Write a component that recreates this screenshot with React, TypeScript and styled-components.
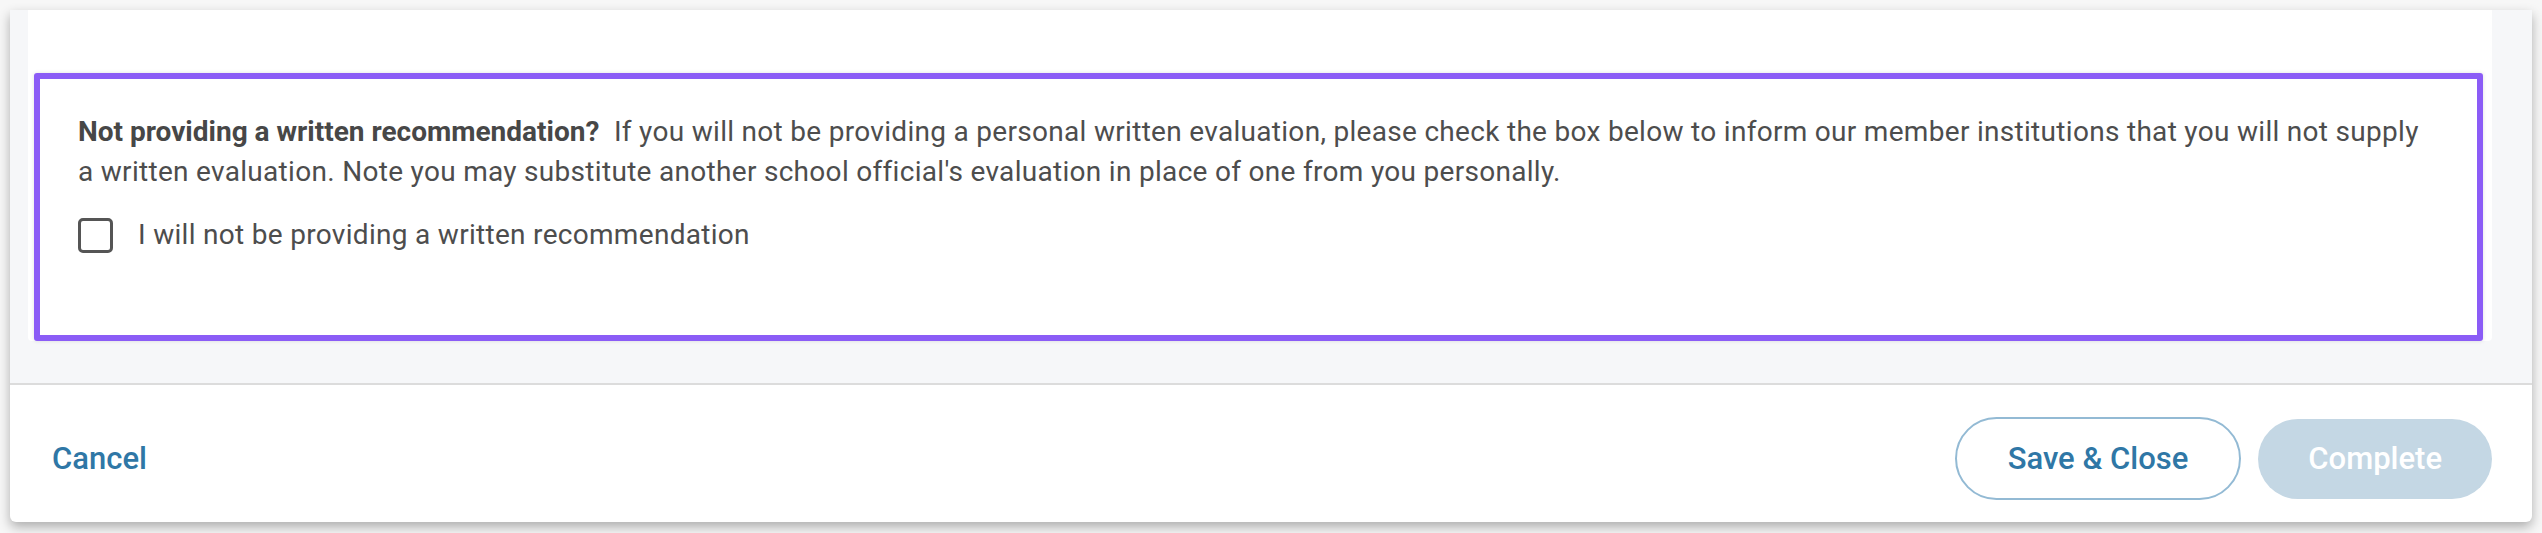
import React from "react";
import styled, { createGlobalStyle } from "styled-components";

const GlobalStyle = createGlobalStyle`
  html, body {
    margin: 0;
    padding: 0;
    background: #f7f7f7;
  }

  body {
    font-family: Roboto, "Liberation Sans", sans-serif;
  }

  * {
    box-sizing: border-box;
  }
`;

const Page = styled.div`
  padding: 10px 10px 11px 10px;
`;

const Card = styled.div`
  background: #ffffff;
  border-radius: 0 0 6px 6px;
  box-shadow: 0 5px 12px rgba(0, 0, 0, 0.3);
  overflow: hidden;
`;

const Body = styled.div`
  background: #f6f7f9;
  padding: 0 40px 51px 18px;
  border-bottom: 2px solid #dcdcdc;
`;

const Panel = styled.div`
  background: #ffffff;
  border-radius: 0 0 4px 4px;
  padding: 63px 9px 0 6px;
`;

const Section = styled.section`
  height: 268px;
  margin-bottom: -9px;
  border: 6px solid #8b5cf6;
  border-radius: 3px;
  padding: 33px 38px 0 38px;
  background: #ffffff;
  box-shadow: 0 0 4px rgba(0, 0, 0, 0.12);
  position: relative;
`;

const Notice = styled.p`
  margin: 0;
  font-size: 28px;
  line-height: 40px;
  letter-spacing: 0.3px;
  color: #4d4d4d;

  strong {
    font-weight: 700;
    letter-spacing: 0;
    color: #474747;
  }
`;

const CheckRow = styled.label`
  display: flex;
  align-items: center;
  gap: 25px;
  margin-top: 23px;
  font-size: 28px;
  line-height: 40px;
  letter-spacing: 0.3px;
  color: #4d4d4d;
  cursor: pointer;
`;

const Box = styled.input.attrs({ type: "checkbox" })`
  appearance: none;
  margin: 0;
  width: 35px;
  height: 35px;
  border: 3px solid #555555;
  border-radius: 5px;
  background: #ffffff;
  flex-shrink: 0;
`;

const Footer = styled.div`
  display: flex;
  align-items: center;
  justify-content: space-between;
  padding: 32px 40px 22px 42px;
`;

const LinkButton = styled.a`
  font-size: 31px;
  font-weight: 500;
  color: #2f77a6;
  text-decoration: none;
  cursor: pointer;
`;

const Actions = styled.div`
  display: flex;
  align-items: center;
  gap: 17px;
`;

const PillButton = styled.button<{ $variant: "outline" | "disabled" }>`
  height: ${(p) => (p.$variant === "outline" ? "83px" : "80px")};
  padding: 0 ${(p) => (p.$variant === "outline" ? "51px" : "50px")};
  border-radius: 42px;
  font-family: Roboto, "Liberation Sans", sans-serif;
  font-size: 31px;
  font-weight: 500;
  border: ${(p) => (p.$variant === "outline" ? "2px solid #93bad4" : "none")};
  background: ${(p) => (p.$variant === "outline" ? "#ffffff" : "#c4d7e4")};
  color: ${(p) => (p.$variant === "outline" ? "#2f77a6" : "#ffffff")};
  cursor: ${(p) => (p.$variant === "outline" ? "pointer" : "default")};
`;

export default function App() {
  return (
    <>
      <GlobalStyle />
      <Page>
        <Card>
          <Body>
            <Panel>
              <Section>
                <Notice>
                  <strong>Not providing a written recommendation?</strong>
                  {"\u00a0 "}If you will not be providing a personal written
                  evaluation, please check the box below to inform our member
                  institutions that you will not supply a written evaluation.
                  Note you may substitute another school official's evaluation
                  in place of one from you personally.
                </Notice>
                <CheckRow>
                  <Box />
                  I will not be providing a written recommendation
                </CheckRow>
              </Section>
            </Panel>
          </Body>
          <Footer>
            <LinkButton>Cancel</LinkButton>
            <Actions>
              <PillButton $variant="outline">Save &amp; Close</PillButton>
              <PillButton $variant="disabled" disabled>
                Complete
              </PillButton>
            </Actions>
          </Footer>
        </Card>
      </Page>
    </>
  );
}
